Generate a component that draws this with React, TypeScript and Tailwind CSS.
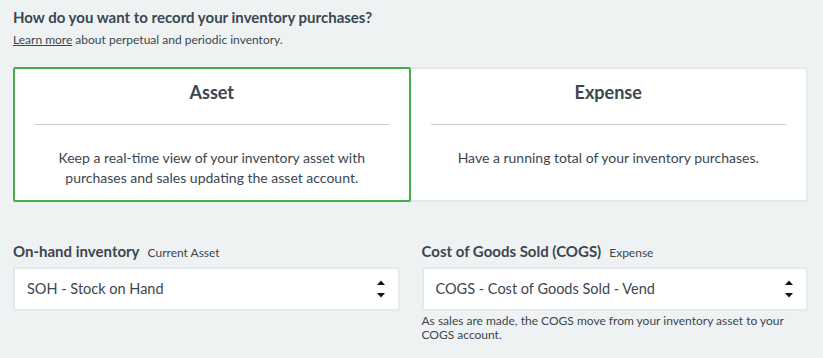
function Arrows() {
  return (
    <svg width="10" height="22" viewBox="0 0 10 22" className="shrink-0">
      <path d="M1 7 L5 2.5 L9 7 Z" fill="#111" />
      <path d="M1 15 L9 15 L5 19.5 Z" fill="#111" />
    </svg>
  );
}

function SelectBox({ value }: { value: string }) {
  return (
    <div className="flex h-[44px] items-center justify-between rounded-[3px] border-2 border-[#e4e9eb] bg-white pl-[12px] pr-[12px]">
      <span className="text-[14.5px] text-[#3b4650]">{value}</span>
      <Arrows />
    </div>
  );
}

export default function App() {
  return (
    <div
      className="min-h-[358px] w-[823px] bg-[#eff2f3] text-[#3b4650]"
      style={{ fontFamily: "Lato, 'Open Sans', sans-serif" }}
    >
      <div className="ml-[13px] w-[795px] pt-[7px]">
        {/* HEADING */}
        <h2 className="text-[15px] font-bold leading-[20px]">
          How do you want to record your inventory purchases?
        </h2>
        <p className="mt-[5px] text-[12px] leading-[15px]">
          <a href="#" className="underline">Learn more</a> about perpetual and periodic inventory.
        </p>

        {/* OPTION CARDS */}
        <div className="mt-[20px] grid h-[135px] grid-cols-2">
          <div className="rounded-[2px] border-2 border-[#45ad4b] bg-white px-[20px] pt-[11px] text-center">
            <div className="text-[18px] font-bold leading-[24px]">Asset</div>
            <div className="mt-[20px] h-px bg-[#c3d0d5]" />
            <p className="mt-[23px] text-[14px] leading-[20px]">
              Keep a real-time view of your inventory asset with purchases and sales updating the asset account.
            </p>
          </div>
          <div className="rounded-r-[3px] border-y-2 border-r-2 border-[#e4e9eb] bg-white px-[20px] pt-[11px] text-center">
            <div className="text-[18px] font-bold leading-[24px]">Expense</div>
            <div className="mt-[20px] h-px bg-[#c3d0d5]" />
            <p className="mt-[23px] text-[14px] leading-[20px]">
              Have a running total of your inventory purchases.
            </p>
          </div>
        </div>

        {/* ACCOUNT SELECTS */}
        <div className="mt-[39px] grid grid-cols-2 gap-[22px]">
          <div>
            <div className="mb-[4px] flex items-baseline gap-[8px] leading-[20px]">
              <span className="text-[15px] font-bold">On-hand inventory</span>
              <span className="text-[12px]">Current Asset</span>
            </div>
            <SelectBox value="SOH - Stock on Hand" />
          </div>
          <div>
            <div className="mb-[4px] flex items-baseline gap-[8px] leading-[20px]">
              <span className="text-[15px] font-bold">Cost of Goods Sold (COGS)</span>
              <span className="text-[12px]">Expense</span>
            </div>
            <SelectBox value="COGS - Cost of Goods Sold - Vend" />
            <p className="mt-[3px] text-[12px] leading-[14px]">
              As sales are made, the COGS move from your inventory asset to your COGS account.
            </p>
          </div>
        </div>
      </div>
    </div>
  );
}
